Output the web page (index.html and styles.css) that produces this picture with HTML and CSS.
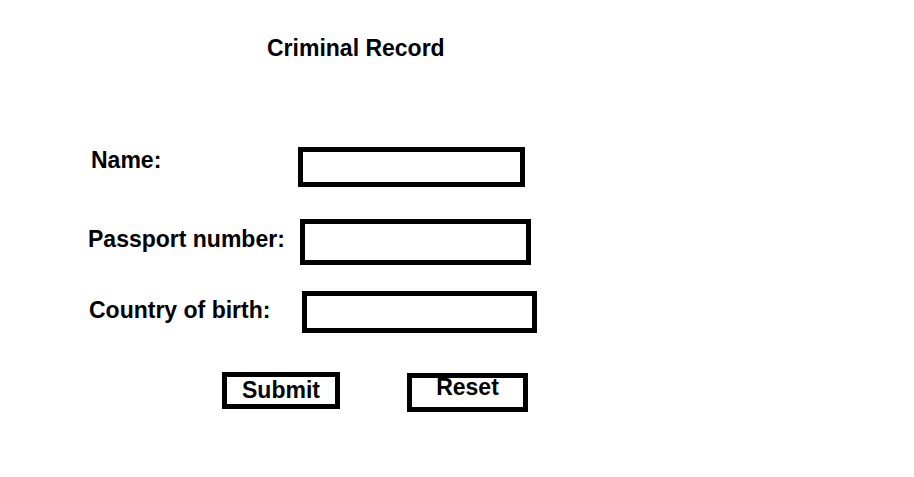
FILE: index.html
```html
<!DOCTYPE html>
<html lang="en">
<head>
    <meta charset="UTF-8">
    <meta name="viewport" content="width=device-width, initial-scale=1.0">
    <title>Criminal Record</title>
    <link rel="stylesheet" href="styles.css">
</head>
<body>
    <!-- Page title -->
    <h1 class="title">Criminal Record</h1>

    <!-- Record form -->
    <form class="record-form">
        <div class="field name-row">
            <label for="name">Name:</label>
            <input type="text" id="name">
        </div>

        <div class="field passport-row">
            <label for="passport">Passport number:</label>
            <input type="text" id="passport">
        </div>

        <div class="field country-row">
            <label for="country">Country of birth:</label>
            <input type="text" id="country">
        </div>

        <div class="actions">
            <button type="submit" class="btn submit-btn">Submit</button>
            <button type="reset" class="btn reset-btn">Reset</button>
        </div>
    </form>
</body>
</html>
```

FILE: styles.css
```css
* {
    margin: 0;
    padding: 0;
    box-sizing: border-box;
}

body {
    font-family: 'Liberation Sans', Arial, sans-serif;
    font-weight: bold;
    color: #000;
    background: #ffffff;
    width: 914px;
    min-height: 477px;
}

.title {
    font-size: 23px;
    line-height: 26px;
    font-weight: bold;
    padding-top: 35px;
    padding-left: 267px;
}

/* Form rows */
.record-form {
    margin-top: 86px;
    padding-left: 88px;
}

.field {
    display: flex;
    align-items: flex-start;
}

.field label {
    font-size: 23px;
    line-height: 26px;
}

.field input {
    border: 5px solid #000;
    background: #fff;
    outline: none;
    font: inherit;
}

.name-row label {
    margin-top: 0;
    margin-left: 3px;
    width: 207px;
}

.name-row input {
    width: 227px;
    height: 40px;
}

.passport-row {
    margin-top: 32px;
}

.passport-row label {
    margin-top: 7px;
    width: 212px;
}

.passport-row input {
    width: 231px;
    height: 46px;
}

.country-row {
    margin-top: 26px;
}

.country-row label {
    margin-top: 6px;
    margin-left: 1px;
    width: 213px;
}

.country-row input {
    width: 235px;
    height: 42px;
}

/* Buttons */
.actions {
    display: flex;
    align-items: flex-start;
    margin-top: 39px;
    padding-left: 134px;
}

.btn {
    font-family: inherit;
    font-weight: bold;
    font-size: 23px;
    line-height: 16px;
    color: #000;
    background: #fff;
    border: 5px solid #000;
    cursor: pointer;
}

.submit-btn {
    width: 118px;
    height: 37px;
    padding-top: 1px;
    padding-bottom: 3px;
}

.reset-btn {
    width: 121px;
    height: 39px;
    margin-top: 1px;
    margin-left: 67px;
    padding-top: 1px;
    padding-bottom: 13px;
}
```
